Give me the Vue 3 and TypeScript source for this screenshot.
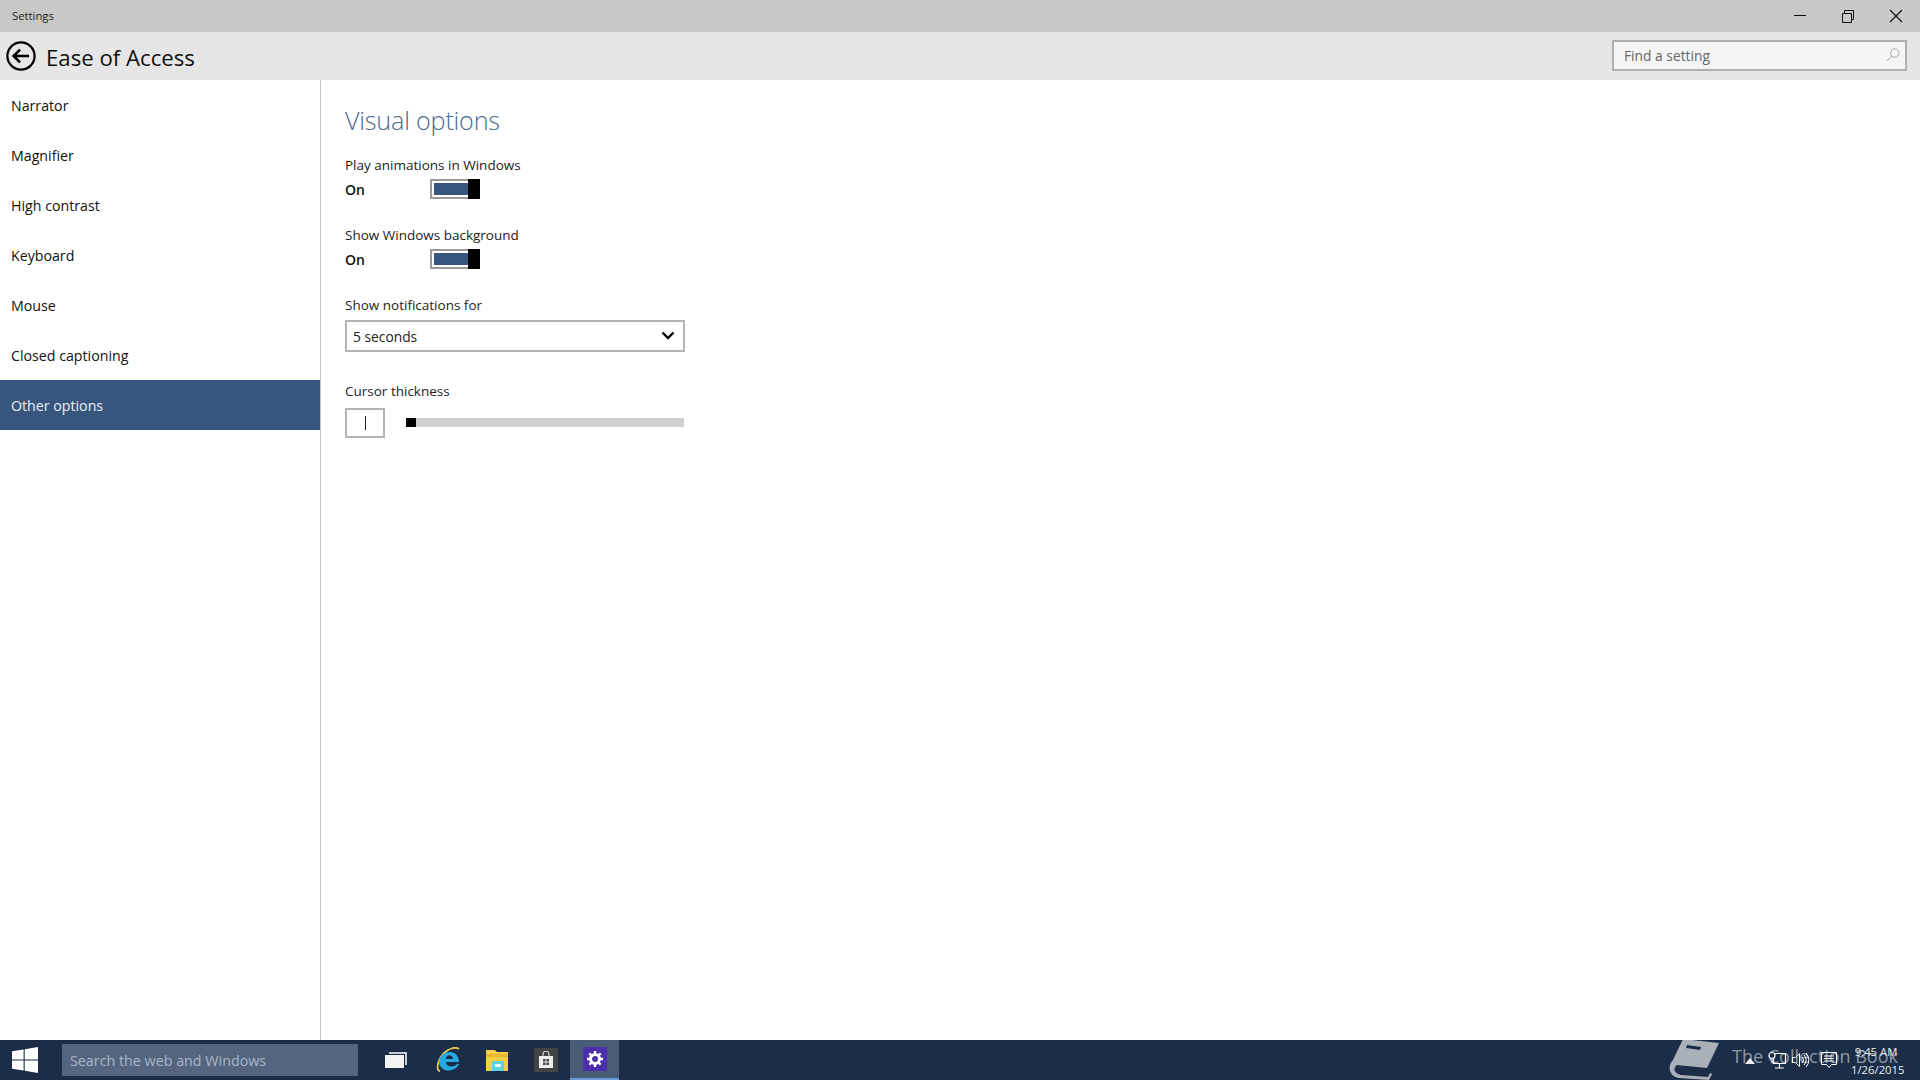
<script setup lang="ts">
const navItems: string[] = ['Narrator', 'Magnifier', 'High contrast', 'Keyboard', 'Mouse', 'Closed captioning', 'Other options']
const activeItem = 'Other options'
const toggles: string[] = ['Play animations in Windows', 'Show Windows background']
</script>

<template>
  <div class="window">
    <div class="titlebar">
      <span class="title">Settings</span>
      <div class="controls">
        <svg width="48" height="32" viewBox="0 0 48 32"><path d="M18 15.500h12" stroke="#111" fill="none" /></svg>
        <svg width="48" height="32" viewBox="0 0 48 32"><path d="M18.500 13.500h9v9h-9zM20.500 13.500v-3h9v9h-2" stroke="#111" fill="none" /></svg>
        <svg width="48" height="32" viewBox="0 0 48 32"><path d="M18 10l12 12M30 10L18 22" stroke="#111" stroke-width="1.2" fill="none" /></svg>
      </div>
    </div>
    <header class="header">
      <svg class="back" width="32" height="32" viewBox="0 0 32 32">
        <circle cx="16" cy="16" r="13.600" fill="none" stroke="#000" stroke-width="2.200" />
        <path d="M24 16H9M15 9.600L8.600 16l6.400 6.400" fill="none" stroke="#000" stroke-width="2.600" />
      </svg>
      <h1 class="page-title">Ease of Access</h1>
      <div class="search">
        <span>Find a setting</span>
        <svg width="16" height="16" viewBox="0 0 16 16"><circle cx="9.800" cy="6" r="4.200" fill="none" stroke="#aaa" /><path d="M6.800 9L2 14" stroke="#aaa" fill="none" /></svg>
      </div>
    </header>
    <div class="body">
      <nav class="sidebar">
        <div v-for="item in navItems" :key="item" class="nav-item" :class="{ active: item === activeItem }">{{ item }}</div>
      </nav>
      <main class="content">
        <h2 class="section">Visual options</h2>
        <div v-for="t in toggles" :key="t" class="toggle-group">
          <div class="label">{{ t }}</div>
          <div class="toggle-row">
            <span class="state">On</span>
            <span class="toggle"><span class="fill"></span><span class="knob"></span></span>
          </div>
        </div>
        <div class="label notif-label">Show notifications for</div>
        <div class="select">
          <span>5 seconds</span>
          <svg width="14" height="10" viewBox="0 0 14 10"><path d="M1.500 1.500L7 7l5.500-5.500" fill="none" stroke="#000" stroke-width="2.400" /></svg>
        </div>
        <div class="label cursor-label">Cursor thickness</div>
        <div class="cursor-row">
          <div class="preview"><span class="caret"></span></div>
          <div class="slider"><span class="thumb"></span></div>
        </div>
      </main>
    </div>
    <footer class="taskbar">
      <div class="start">
        <svg width="26" height="26" viewBox="0 0 26 26"><path d="M0 4.200l11.600-1.700v10H0zM12.700 2.300L26 0v12.500H12.700zM0 13.600h11.600v10L0 21.800zM12.700 13.600H26V26l-13.300-2.300z" fill="#fff" /></svg>
      </div>
      <div class="task-search">Search the web and Windows</div>
      <div class="task-icons">
        <div class="task-icon first">
          <svg width="24" height="18" viewBox="0 0 24 18"><path d="M5 1h18v13H21V3H5z" fill="#c9ced6" /><rect x="1" y="4" width="19" height="13" fill="#f4f4f4" /></svg>
        </div>
        <div class="task-icon">
          <svg width="26" height="26" viewBox="0 0 26 26">
            <path d="M5 24C1 24 2 14 8 7 13 2 20-1 24 2" fill="none" stroke="#e8c44c" stroke-width="1.800" />
            <path d="M4 14C5 8 10 5 15 5s9 4 9 10H11c0 5 8 6 11 2h2c-3 7-14 9-18 3-2-2-2-4-2-6zm7-2h7c0-5-7-5-7 0z" fill="#26a9e0" />
          </svg>
        </div>
        <div class="task-icon">
          <svg width="24" height="22" viewBox="0 0 24 22">
            <path d="M1 1h9l2 2h11v19H1z" fill="#f6cf45" />
            <rect x="1" y="5" width="22" height="3" fill="#e8b62e" />
            <rect x="7" y="12" width="12" height="10" fill="#5fd0e6" />
            <rect x="10" y="15" width="6" height="3" fill="#e9f7fa" />
          </svg>
        </div>
        <div class="task-icon">
          <div class="store">
            <svg width="16" height="18" viewBox="0 0 16 18">
              <path d="M5 5V3a3 3 0 0 1 6 0v2" fill="none" stroke="#eee" />
              <path d="M1 5h14v12H1z" fill="#eee" />
              <path d="M5 8h2.600v2.600H5zM8.400 8H11v2.600H8.400zM5 11.400h2.600V14H5zM8.400 11.400H11V14H8.400z" fill="#444" />
            </svg>
          </div>
        </div>
        <div class="task-icon running">
          <div class="gear-tile">
            <svg width="16" height="16" viewBox="0 0 16 16">
              <circle cx="8" cy="8" r="4.500" fill="none" stroke="#fff" stroke-width="3" />
              <path d="M8 0v3M8 13v3M0 8h3M13 8h3M2.300 2.300l2.200 2.200M11.500 11.500l2.200 2.200M13.700 2.300l-2.200 2.200M4.500 11.500l-2.200 2.200" stroke="#fff" stroke-width="2.400" />
            </svg>
          </div>
        </div>
      </div>
      <div class="watermark">
        <svg width="52" height="40" viewBox="0 2 52 40">
          <path d="M14 1L50 5 38 30 8 27C3 31 6 36 12 37l27 2 2-4 2 1-3 6-30-2C0 39-2 28 4 22z" fill="#aab0ba" />
          <path d="M18 7l14 2-1 3-14-2z" fill="#1c2d47" />
        </svg>
        <span>The Collection Book</span>
      </div>
      <div class="tray">
        <svg class="tray-up" width="10" height="6" viewBox="0 0 10 6"><path d="M5 0l5 6H0z" fill="#eee" /></svg>
        <svg class="tray-net" width="20" height="20" viewBox="0 0 20 20"><path d="M6.500 3.500h12v10h-12zM12.500 13.500v4M8 18h9" fill="none" stroke="#fff" stroke-width="1.200" /><circle cx="5" cy="5.500" r="3" fill="#1c2d47" stroke="#fff" stroke-width="1.200" /><path d="M5 8.500v5" stroke="#fff" /></svg>
        <svg class="tray-vol" width="20" height="20" viewBox="0 0 20 20"><path d="M1.500 7.500h3l4-4v13l-4-4h-3z" fill="none" stroke="#fff" /><path d="M11 7a4 4 0 0 1 0 6M13 5a7 7 0 0 1 0 10M15 3a10 10 0 0 1 0 14" fill="none" stroke="#fff" /></svg>
        <svg class="tray-msg" width="20" height="20" viewBox="0 0 20 20"><path d="M2.500 2.500h15v12h-5l-2.500 3-2.500-3h-5zM5 6h10M5 8.500h10M5 11h10" fill="none" stroke="#fff" /></svg>
        <div class="clock"><div>9:45 AM</div><div>1/26/2015</div></div>
      </div>
    </footer>
  </div>
</template>

<style scoped>
.window { width: 1920px; height: 1080px; display: flex; flex-direction: column; background: #fff; font-family: "Open Sans", "Noto Sans", sans-serif; color: #111; overflow: hidden; position: relative; }
.titlebar { height: 32px; background: #c8c8c8; display: flex; align-items: center; justify-content: space-between; flex: none; }
.title { font-size: 11.300px; margin-left: 12px; color: #222; margin-top: -2px; }
.controls { display: flex; }
.controls svg { display: block; }
.header { height: 48px; flex: none; background: #e6e6e6; display: flex; align-items: center; padding: 0 13px 0 5px; }
.back { flex: none; }
.page-title { font-size: 22.200px; font-weight: 400; margin: 2px 0 0 9px; color: #111; flex: 1; }
.search { width: 295px; height: 31px; box-sizing: border-box; border: 2px solid #b0b0b0; background: #f5f5f5; display: flex; align-items: center; justify-content: space-between; padding: 0 4px 0 10px; font-size: 13.800px; color: #666; margin-top: -2px; }
.body { flex: 1; display: flex; min-height: 0; }
.sidebar { width: 321px; flex: none; box-sizing: border-box; border-right: 1px solid #c8c8c8; }
.nav-item { height: 50px; display: flex; align-items: center; padding-left: 11px; font-size: 14.200px; color: #111; }
.nav-item.active { background: #38557d; color: #e8f0f8; }
.content { padding: 22px 0 0 24px; flex: 1; }
.section { font-size: 25.200px; font-weight: 300; color: #4d6a8f; margin: 0; line-height: 36px; letter-spacing: -0.200px; }
.toggle-group { height: 70px; }
.toggle-group:first-of-type { margin-top: 15px; }
.label { font-size: 13.500px; line-height: 24px; color: #222; }
.toggle-row { display: flex; align-items: center; height: 24px; }
.state { width: 85px; font-size: 14px; font-weight: 600; color: #111; }
.toggle { width: 50px; height: 20px; box-sizing: border-box; border: 2px solid #9a9a9a; padding: 2px; display: flex; position: relative; background: #fff; }
.fill { width: 35px; background: #38557d; height: 12px; }
.knob { position: absolute; right: -2px; top: -2px; width: 12px; height: 20px; background: #000; }
.select { width: 340px; height: 32px; box-sizing: border-box; border: 2px solid #b5b5b5; margin-top: 3px; display: flex; align-items: center; justify-content: space-between; padding: 0 8px 0 6px; font-size: 13.800px; color: #222; }
.cursor-label { margin-top: 27px; }
.cursor-row { display: flex; align-items: center; margin-top: 5px; }
.preview { width: 40px; height: 30px; box-sizing: border-box; border: 2px solid #b5b5b5; display: flex; align-items: center; justify-content: center; }
.caret { width: 1px; height: 14px; background: #222; }
.slider { width: 278px; height: 9px; margin-left: 21px; margin-top: -1px; background: #cfcfcf; }
.thumb { display: block; width: 10px; height: 9px; background: #000; }
.taskbar { height: 40px; flex: none; background: #1c2d47; display: flex; align-items: center; position: relative; }
.start { width: 62px; display: flex; justify-content: flex-start; padding-left: 12px; box-sizing: border-box; flex: none; }
.task-search { width: 296px; height: 32px; background: #54667f; color: #a9b6c8; font-size: 14.300px; line-height: 34px; padding-left: 8px; box-sizing: border-box; }
.task-icons { display: flex; margin-left: 16px; }
.task-icon { width: 49px; height: 40px; display: flex; align-items: center; justify-content: center; box-sizing: border-box; }
.task-icon.first svg { margin-right: 6px; }
.task-icon.running { background: #4a5c75; border-bottom: 2px solid #6a9ad8; }
.store { width: 24px; height: 24px; background: #444; display: flex; align-items: center; justify-content: center; }
.gear-tile { width: 24px; height: 24px; background: #4a2fa8; display: flex; align-items: center; justify-content: center; }
.tray { position: absolute; right: 19px; top: 0; height: 40px; display: flex; align-items: center; color: #eee; }
.tray-up { margin-top: 2px; }
.tray-net { margin-left: 12px; }
.tray-vol { margin-left: 4px; }
.tray-msg { margin-left: 8px; }
.clock { font-size: 11.300px; line-height: 18px; text-align: center; margin-left: 12px; width: 50px; padding-top: 1px; white-space: nowrap; color: #e8ecf2; }
.watermark { position: absolute; left: 1669px; top: 0; height: 40px; display: flex; align-items: center; color: #8d97a6; font-size: 18px; }
.watermark svg { margin-right: 11px; }
.watermark span { margin-top: -9px; }
</style>

<style>
html, body { margin: 0; }
</style>
